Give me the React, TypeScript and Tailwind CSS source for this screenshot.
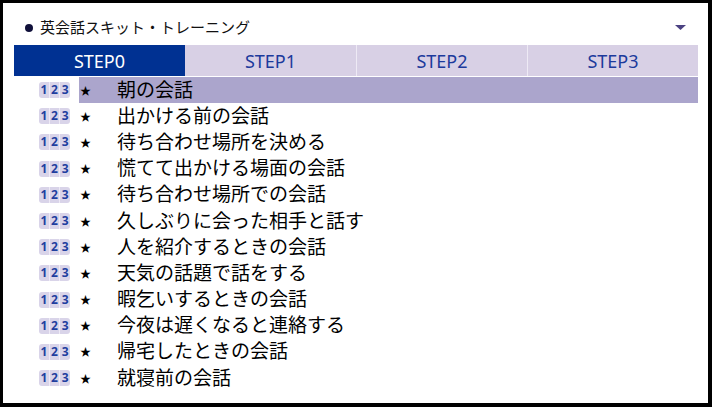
const tabs = ['STEP0', 'STEP1', 'STEP2', 'STEP3'];

const lessons = [
  '朝の会話',
  '出かける前の会話',
  '待ち合わせ場所を決める',
  '慌てて出かける場面の会話',
  '待ち合わせ場所での会話',
  '久しぶりに会った相手と話す',
  '人を紹介するときの会話',
  '天気の話題で話をする',
  '暇乞いするときの会話',
  '今夜は遅くなると連絡する',
  '帰宅したときの会話',
  '就寝前の会話',
];

function Badge() {
  return (
    <div className="flex h-[16px] w-[31px] overflow-hidden rounded-[3px] bg-[#d9d4e9] text-[12px] font-bold leading-none text-[#1f3f9f]">
      {['1', '2', '3'].map((d, i) => (
        <span
          key={d}
          className={`flex flex-1 items-center justify-center ${i > 0 ? 'border-l border-[#eeeaf6]' : ''}`}
        >
          {d}
        </span>
      ))}
    </div>
  );
}

export default function App() {
  return (
    <div
      className="h-[407px] w-[712px] border-t-[3px] border-l-[3px] border-r-4 border-b-4 border-black bg-white"
      style={{ fontFamily: '"Noto Sans", "Noto Sans CJK JP", sans-serif' }}
    >
      <div className="flex h-full flex-col pl-[11px] pr-[10px]">
        <div className="flex h-[42px] items-center pt-[7px]">
          <span className="ml-[11px] h-[8px] w-[8px] rounded-full bg-[#10103a]" />
          <span className="ml-[7px] text-[15px] leading-none text-[#111]">英会話スキット・トレーニング</span>
          <svg className="ml-auto mr-[12px]" width="11" height="5" viewBox="0 0 11 5">
            <path d="M0 0H11L5.5 5Z" fill="#4b4282" />
          </svg>
        </div>

        <div className="grid h-[31px] grid-cols-4 bg-[#d8d0e5]">
          {tabs.map((t, i) => (
            <div
              key={t}
              className={`flex items-center justify-center text-[18px] leading-none ${
                i === 0 ? 'bg-[#003192] text-white' : 'text-[#1c3a9c]'
              } ${i > 1 ? 'border-l border-[#eeeaf5]' : ''}`}
            >
              {t}
            </div>
          ))}
        </div>

        <div className="mt-[1px] flex flex-col">
          {lessons.map((l, i) => (
            <div key={l} className="flex h-[26.2px] items-center">
              <div className="w-[65px] pl-[25px]">
                <Badge />
              </div>
              <div className={`flex h-full flex-1 items-center ${i === 0 ? 'bg-[#aba5cc]' : ''}`}>
                <span className="w-[38px] pl-[1px] text-[11px] leading-none text-black">★</span>
                <span
                  className="pb-[4px] text-[19px] leading-none text-black"
                  style={{ fontFamily: '"Noto Sans CJK JP", sans-serif' }}
                >
                  {l}
                </span>
              </div>
            </div>
          ))}
        </div>
      </div>
    </div>
  );
}
